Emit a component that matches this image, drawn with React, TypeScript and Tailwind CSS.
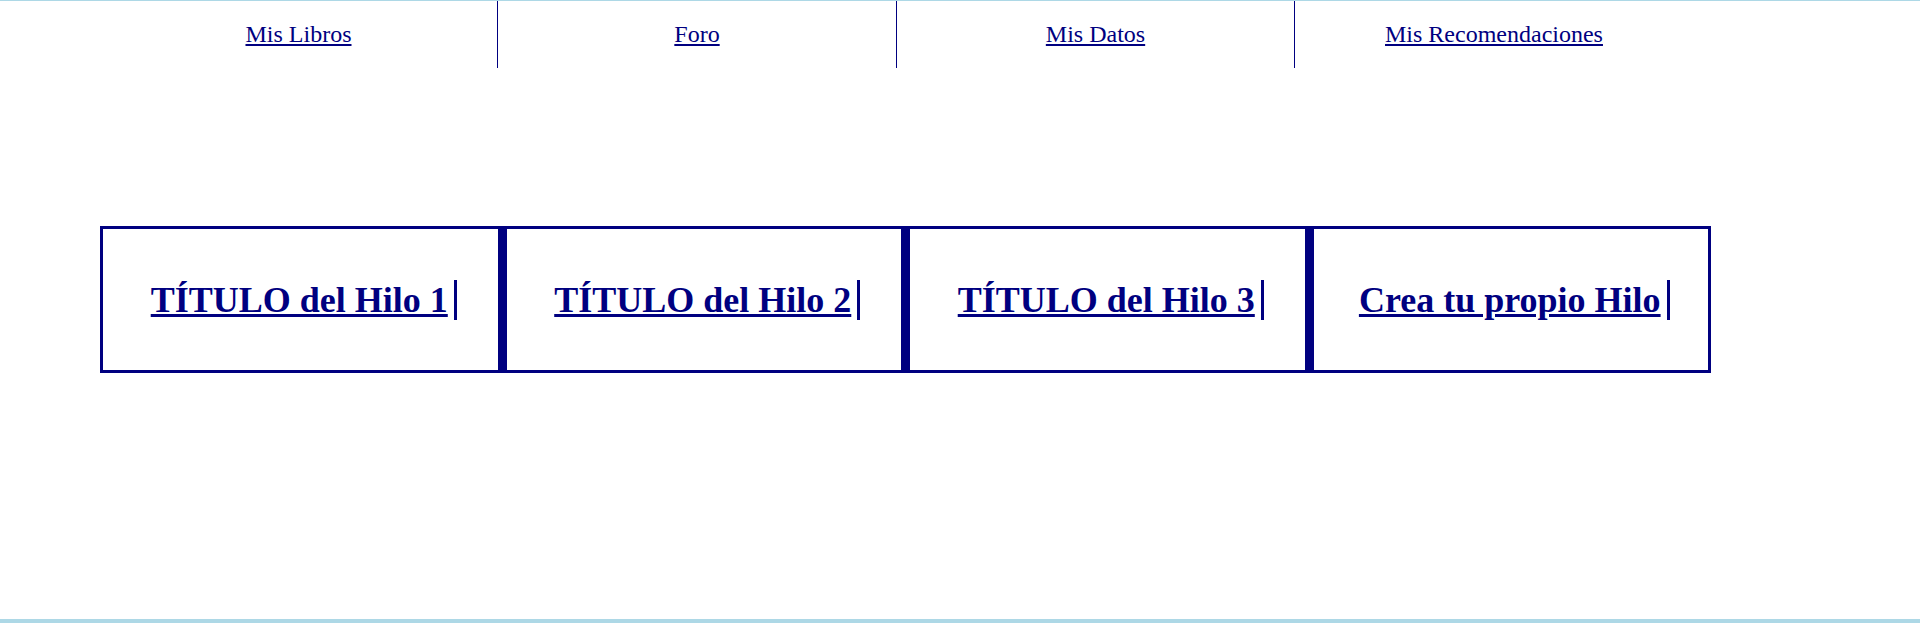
const secciones = ['Mis Libros', 'Foro', 'Mis Datos', 'Mis Recomendaciones'];
const hilos = ['TÍTULO del Hilo 1', 'TÍTULO del Hilo 2', 'TÍTULO del Hilo 3', 'Crea tu propio Hilo'];

// anchos de cada apartado del menu (el segundo es un pixel mas ancho)
const anchos = ['w-[398px]', 'w-[399px]', 'w-[398px]', 'w-[398px]'];

export default function App() {
  return (
    <div className="h-[623px] flex flex-col bg-white border-t border-[#add8e6] text-[#000080] font-['Liberation_Serif','Times_New_Roman',serif]">
      {/* menu principal */}
      <nav>
        <ul className="flex ml-[100px] h-[67px]">
          {secciones.map((s, i) => (
            <li
              key={s}
              className={
                anchos[i] +
                (i < secciones.length - 1
                  ? ' pt-[15px] text-[24px] leading-normal text-center border-r border-[#000080]'
                  : ' pt-[15px] text-[24px] leading-normal text-center')
              }
            >
              <a href="#" className="underline text-[#000080]">
                {s}
              </a>
            </li>
          ))}
        </ul>
      </nav>

      {/* hilos del foro */}
      <section className="mt-[158px] ml-[100px] w-[1611px] h-[147px] flex border-[3px] border-[#000080]">
        {hilos.map((h, i) => (
          <div
            key={h}
            className={
              i === 0
                ? 'flex-1 flex items-center justify-center'
                : 'flex-1 flex items-center justify-center border-l-[9px] border-[#000080]'
            }
          >
            <h2 className="m-0 pl-[7px] text-[36px] font-bold leading-normal">
              <a href="#" className="underline text-[#000080] pr-[6px] border-r-[3px] border-[#000080]">
                {h}
              </a>
            </h2>
          </div>
        ))}
      </section>

      <footer className="mt-auto h-[4px] bg-[#add8e6]" />
    </div>
  );
}
